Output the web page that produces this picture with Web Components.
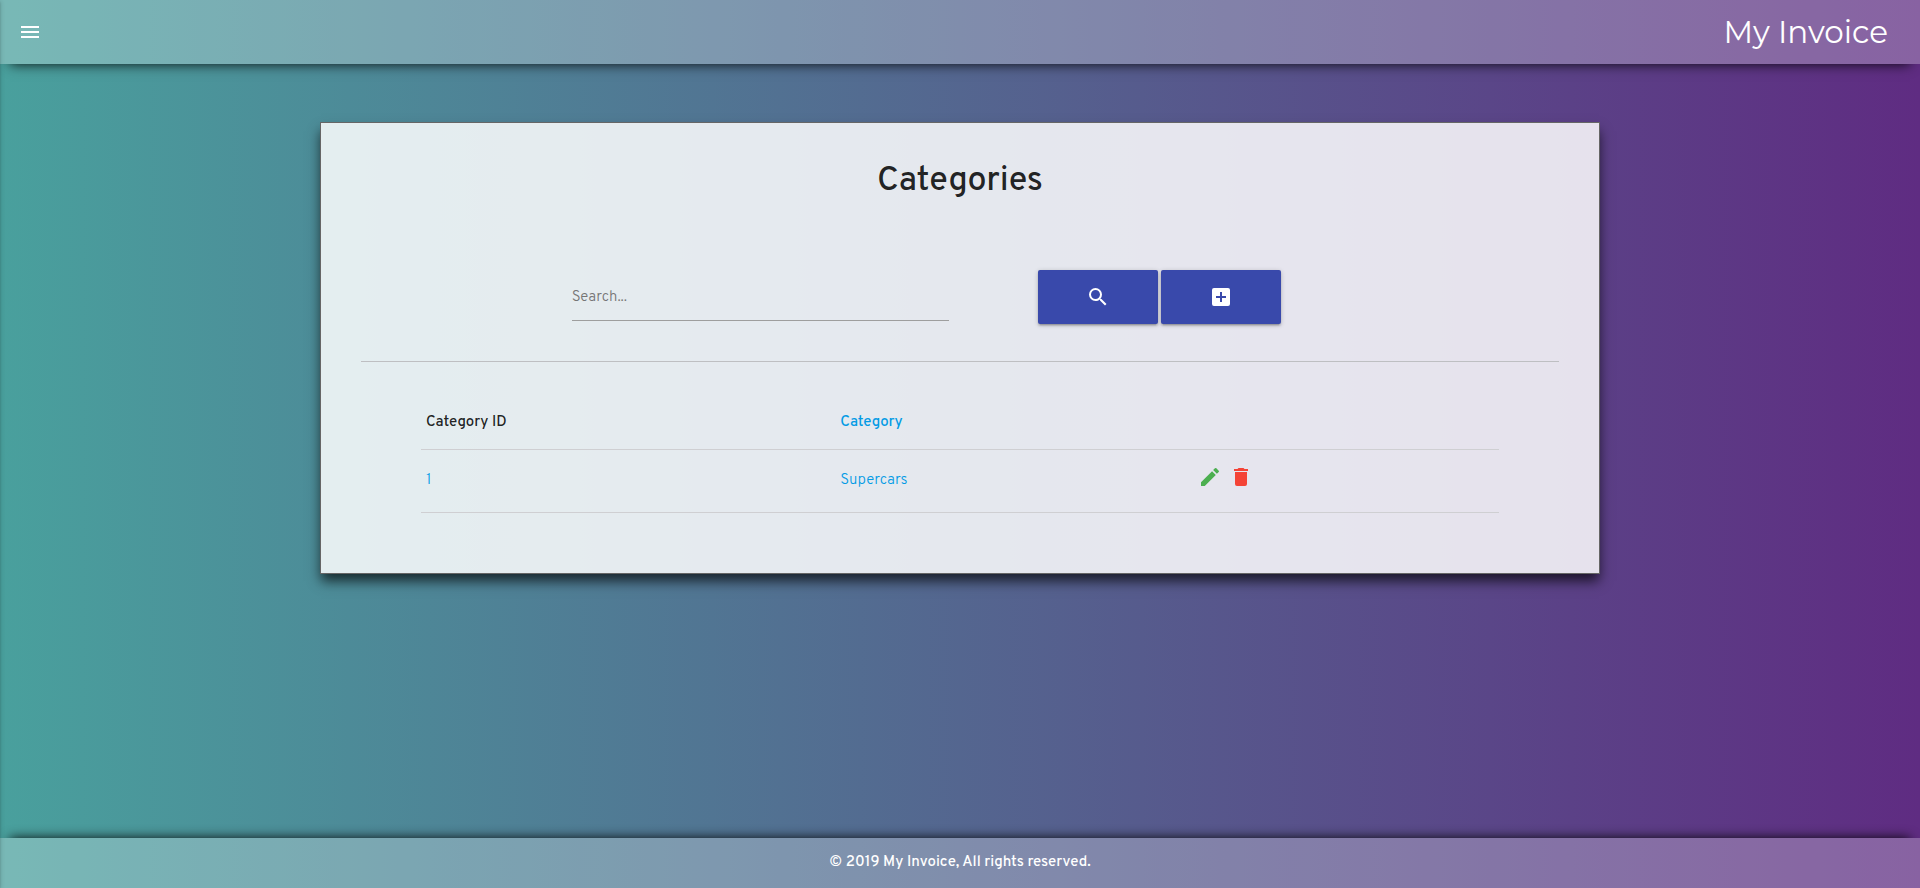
<!DOCTYPE html>
<html lang="en">
<head>
<meta charset="utf-8">
<meta name="viewport" content="width=device-width, initial-scale=1">
<title>My Invoice</title>
<style>
html{height:100%;background:linear-gradient(to right,#49a09d,#5f2c82);background-attachment:fixed}
body{margin:0;min-height:100%;display:flex;font-family:"Overpass",Roboto,"Liberation Sans",sans-serif;font-size:15px;line-height:24px;color:rgba(0,0,0,.87)}
</style>
</head>
<body>
<invoice-app></invoice-app>
<script>
const ICONS={
menu:'M3 18h18v-2H3v2zm0-5h18v-2H3v2zm0-7v2h18V6H3z',
search:'M15.5 14h-.79l-.28-.27A6.471 6.471 0 0 0 16 9.500 6.500 6.500 0 1 0 9.500 16c1.610 0 3.090-.59 4.230-1.570l.27.28v.79l5 4.990L20.490 19l-4.990-5zm-6 0C7.010 14 5 11.990 5 9.500S7.010 5 9.500 5 14 7.010 14 9.500 11.990 14 9.500 14z',
add:'M19 3H5a2 2 0 0 0-2 2v14a2 2 0 0 0 2 2h14a2 2 0 0 0 2-2V5a2 2 0 0 0-2-2zm-2 10h-4v4h-2v-4H7v-2h4V7h2v4h4v2z',
edit:'M3 17.250V21h3.750L17.810 9.940l-3.750-3.750L3 17.250zM20.710 7.040a1 1 0 0 0 0-1.410l-2.340-2.340a1 1 0 0 0-1.410 0l-1.830 1.830 3.750 3.750 1.830-1.830z',
trash:'M6 19a2 2 0 0 0 2 2h8a2 2 0 0 0 2-2V7H6v12zM19 4h-3.500l-1-1h-5l-1 1H5v2h14V4z'
};
function define(name,html){
  const t=document.createElement('template');
  t.innerHTML=html;
  customElements.define(name,class extends HTMLElement{
    constructor(){super();this.attachShadow({mode:'open'}).append(t.content.cloneNode(true))}
  });
}
customElements.define('app-icon',class extends HTMLElement{
  connectedCallback(){
    if(this.shadowRoot)return;
    this.attachShadow({mode:'open'}).innerHTML=`<style>:host{display:block;width:24px;height:24px}svg{display:block;width:24px;height:24px;fill:currentColor}</style><svg viewBox="0 0 24 24" aria-hidden="true"><path d="${ICONS[this.getAttribute('name')]}"/></svg>`;
  }
});
define('app-header',`<style>
:host{display:block;background:rgba(255,255,255,.26);box-shadow:0 10px 12px -10px rgba(0,0,0,.9);color:#fff}
header{display:flex;align-items:center;justify-content:space-between;height:64px;padding:0 32px 0 18px}
button{padding:0;border:0;background:none;color:inherit;cursor:pointer}
a{color:inherit;text-decoration:none;font:400 31px/64px Montserrat,Inter,sans-serif}
</style><header><button aria-label="Open menu"><app-icon name="menu"></app-icon></button><a href="#"><slot></slot></a></header>`);
define('app-footer',`<style>
:host{display:block;background:rgba(255,255,255,.26);box-shadow:0 -10px 12px -10px rgba(0,0,0,.9);color:#fff;text-align:center;font-weight:500}
footer{padding:13px 0}
</style><footer><slot></slot></footer>`);
define('side-drawer',`<style>
:host{position:fixed;top:0;bottom:0;left:0;width:300px;transform:translateX(-100%);box-shadow:0 2px 2px 0 rgba(0,0,0,.14),0 1px 5px 0 rgba(0,0,0,.2)}
</style>`);
define('content-card',`<style>
:host{display:block;box-sizing:border-box;width:70%;max-width:1280px;margin:58px auto;padding:0 40px 60px;border:1px solid #666;background:rgba(255,255,255,.85);background-clip:padding-box;box-shadow:0 8px 12px -1px rgba(0,0,0,.7)}
h1{margin:0;padding:35px 0 0;text-align:center;font-size:34px;line-height:48px;font-weight:500}
</style><h1><slot name="heading"></slot></h1><slot></slot>`);
define('icon-button',`<style>
:host{display:block}
button{display:flex;align-items:center;justify-content:center;width:120px;height:54px;padding:0;border:0;border-radius:2px;background:#3949ab;color:#fff;cursor:pointer;box-shadow:0 2px 2px 0 rgba(0,0,0,.14),0 3px 1px -2px rgba(0,0,0,.12),0 1px 5px 0 rgba(0,0,0,.2)}
</style><button><slot></slot></button>`);
define('search-bar',`<style>
:host{display:block;padding:64px 0 37px;border-bottom:1px solid #bebfc2}
form{display:grid;grid-template-columns:1fr 2fr 2fr 1fr;align-items:center}
label{grid-column:2;padding:0 11px}
input{display:block;box-sizing:border-box;width:100%;height:48px;padding:2px 0 0;border:0;border-bottom:1px solid #9e9e9e;border-radius:0;outline:0;background:none;font:300 15px "Overpass",Roboto,sans-serif;color:inherit}
input::placeholder{color:#757575;opacity:1}
div{display:flex;justify-content:center;gap:3px}
</style><form><label><input type="text" placeholder="Search..." aria-label="Search"></label><div><icon-button><app-icon name="search"></app-icon></icon-button><icon-button><app-icon name="add"></app-icon></icon-button></div></form>`);
define('category-table',`<style>
:host{display:block;width:90%;margin:33px auto 0}
table{width:100%;border-collapse:collapse;table-layout:fixed}
tr{border-bottom:1px solid #cfcfd2}
th,td{padding:15px 5px;text-align:left}
th{padding:16px 5px 14px;font-weight:500}
td{height:32px;color:#039be5;font-weight:300}
.id{width:37.5%}.name{width:32.3%}
a{color:#039be5;text-decoration:none}
.actions{display:flex;gap:7px;padding-bottom:8px}
.edit{color:#4caf50}.del{color:#f44336}
</style><table><thead><tr><th class="id">Category ID</th><th class="name"><a href="#">Category</a></th><th></th></tr></thead>
<tbody><tr><td>1</td><td>Supercars</td><td><div class="actions"><a class="edit" href="#" aria-label="Edit"><app-icon name="edit"></app-icon></a><a class="del" href="#" aria-label="Delete"><app-icon name="trash"></app-icon></a></div></td></tr></tbody></table>`);
define('invoice-app',`<style>
:host{display:flex;flex-direction:column;flex:1;min-width:0}
main{flex:1}
</style><app-header>My Invoice</app-header><main><content-card><span slot="heading">Categories</span><search-bar></search-bar><category-table></category-table></content-card></main><app-footer>© 2019 My Invoice, All rights reserved.</app-footer><side-drawer></side-drawer>`);
</script>
</body>
</html>
